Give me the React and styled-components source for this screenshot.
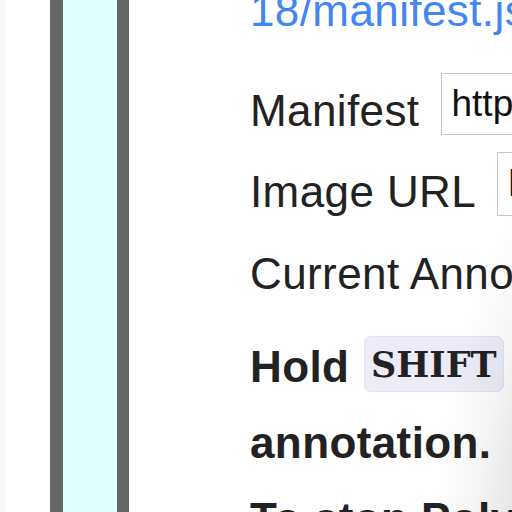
import React from "react";
import styled, { createGlobalStyle } from "styled-components";

export default function App() {
    return (
        <>
            <GlobalStyle />
            <Page>
                <Edge />
                <Sidebar />
                <Main>
                    <ManifestLink href="#">18/manifest.json</ManifestLink>

                    {/* Manifest */}
                    <Field $top={37}>
                        <Label>Manifest</Label>
                        <UrlInput $h={62} defaultValue="https://iiif.example.org/2018/manifest.json" />
                    </Field>

                    {/* Image URL */}
                    <Field $top={17}>
                        <Label>Image URL</Label>
                        <UrlInput $h={64} defaultValue="https://iiif.example.org/image/full/full/0/default.jpg" />
                    </Field>

                    <Current>Current Annotation: none</Current>

                    {/* Hilfe */}
                    <Help>
                        Hold <Key>SHIFT</Key> and click to start a new
                        <br />
                        annotation.
                        <br />
                        To stop Polygon drawing, press ESC.
                    </Help>
                </Main>
            </Page>
        </>
    );
}

/* ------------------------------------------
   Styled Components
------------------------------------------- */

const GlobalStyle = createGlobalStyle`
  html, body {
    margin: 0;
    padding: 0;
    background: #ffffff;
  }
  body {
    font-family: "Liberation Sans", Arial, sans-serif;
    color: #222;
  }
`;

const Page = styled.div`
  position: relative;
  width: 512px;
  height: 512px;
  overflow: hidden;
  display: flex;
  align-items: stretch;
  background: #fff;

  &::after {
    content: "";
    position: absolute;
    inset: 0;
    pointer-events: none;
    background: radial-gradient(
      ellipse 170px 440px at 600px 580px,
      rgba(0, 0, 0, 0.22) 0%,
      rgba(0, 0, 0, 0.12) 45%,
      rgba(0, 0, 0, 0.04) 75%,
      rgba(0, 0, 0, 0) 100%
    );
  }
`;

const Edge = styled.div`
  width: 5px;
  flex-shrink: 0;
  background: #f7f7f7;
`;

const Sidebar = styled.div`
  flex-shrink: 0;
  margin-left: 45px;
  width: 54px;
  border-left: 13px solid #666;
  border-right: 12px solid #666;
  background: #e0ffff;
`;

const Main = styled.div`
  flex-shrink: 0;
  width: 900px;
  padding-left: 121px;
  margin-top: -14px;
  font-size: 44px;
  letter-spacing: 0.4px;
  white-space: nowrap;
`;

const ManifestLink = styled.a`
  display: block;
  line-height: 50px;
  color: #4285f4;
  text-decoration: none;
`;

const Field = styled.div`
  display: flex;
  align-items: flex-end;
  gap: 21px;
  margin-top: ${(p) => p.$top}px;
`;

const Label = styled.span`
  line-height: 49px;
`;

const UrlInput = styled.input`
  box-sizing: border-box;
  height: ${(p) => p.$h}px;
  width: 420px;
  margin: 0;
  padding: 0 10px;
  border: 1px solid #c6c6c6;
  border-radius: 0;
  font-family: "Liberation Sans", Arial, sans-serif;
  font-size: 37px;
  color: #111;
  background: #fff;
  outline: none;
`;

const Current = styled.div`
  margin-top: 33px;
  line-height: 49px;
`;

const Help = styled.p`
  margin: 31px 0 0;
  font-weight: 700;
  line-height: 76px;
`;

const Key = styled.kbd`
  display: inline-block;
  height: 56px;
  line-height: 56px;
  padding: 0 6px;
  margin: 0 1px 0 2px;
  vertical-align: 5px;
  box-sizing: border-box;
  font-family: "DejaVu Serif", "Courier New", monospace;
  font-size: 35px;
  font-weight: 700;
  letter-spacing: 0;
  color: #222;
  background: #ececf8;
  border: 1px solid #e2e2ee;
  border-radius: 7px;
`;
